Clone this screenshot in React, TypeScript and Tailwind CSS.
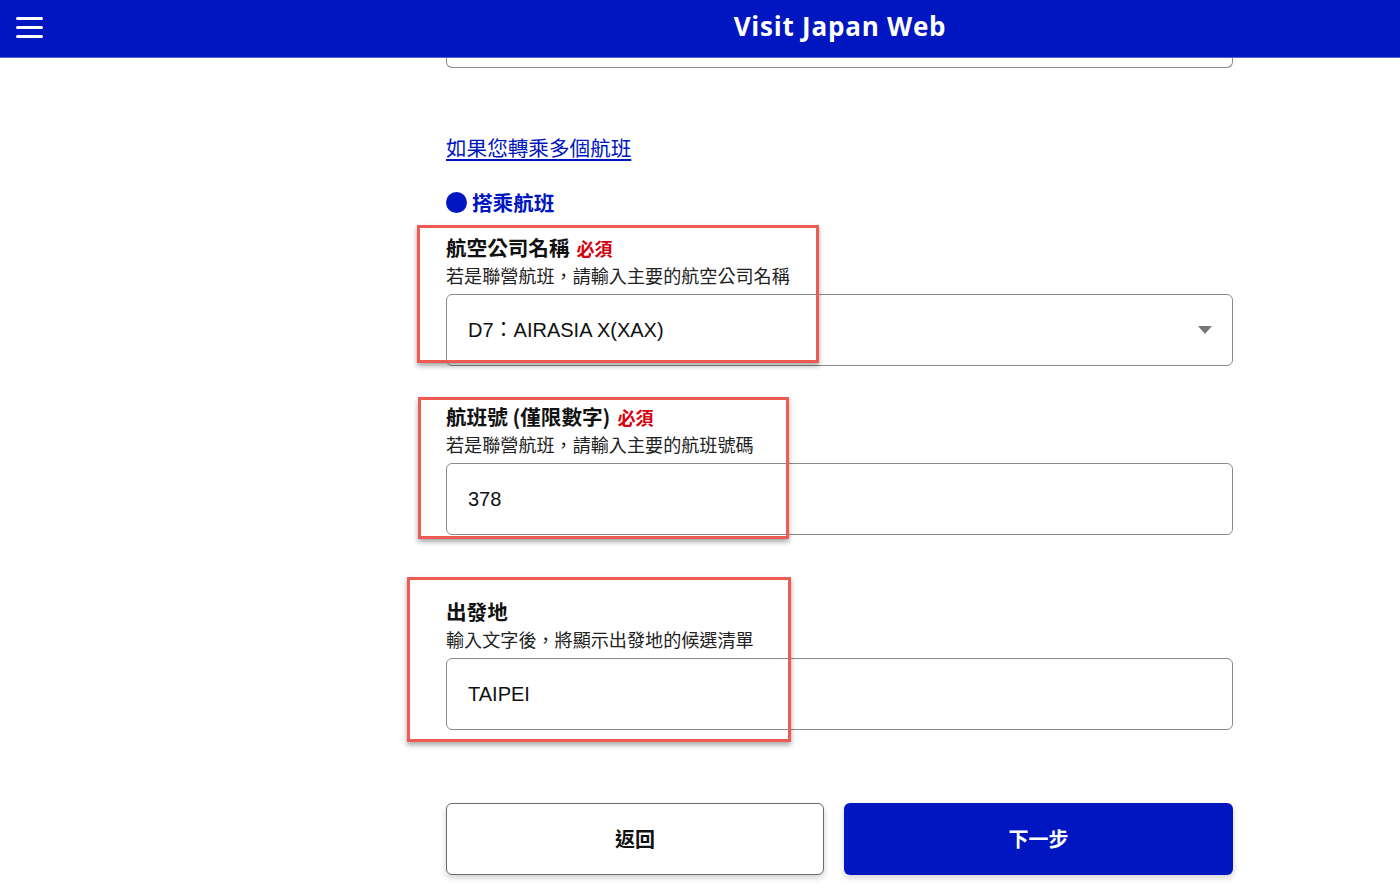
import { useState } from "react";

const CJK = "font-['Noto_Sans_CJK_TC','Noto_Sans',sans-serif]";
const LATIN = "font-['Liberation_Sans','Noto_Sans_CJK_TC',sans-serif]";

function FieldLabel({ label, required, hint }: { label: string; required?: boolean; hint: string }) {
  return (
    <div className={CJK}>
      <div className="flex items-baseline h-[28px] leading-[26px]">
        <span className="text-[20.6px] font-bold text-[#111]">{label}</span>
        {required && <span className="ml-[7px] text-[18px] font-bold text-[#d7000f]">必須</span>}
      </div>
      <div className="h-[28px] leading-[26px] text-[18.1px] text-[#222]">{hint}</div>
    </div>
  );
}

function TextBox({ value, select }: { value: string; select?: boolean }) {
  return (
    <div className="mt-[4px] h-[72px] rounded-[6px] border border-[#8a8a8a] bg-white flex items-center pl-[21px] pr-[20px]">
      <span className={`${LATIN} flex-1 text-[20px] text-[#111]`}>{value}</span>
      {select && (
        <svg width="14" height="8" viewBox="0 0 14 8">
          <polygon points="0,0 14,0 7,8" fill="#777" />
        </svg>
      )}
    </div>
  );
}

export default function App() {
  const [flights] = useState({ airline: "D7：AIRASIA X(XAX)", number: "378", from: "TAIPEI" });

  return (
    <div className="relative min-h-[896px] bg-white">
      {/* header */}
      <header className="relative h-[57px] bg-[#0016c0] shadow-[0_1px_0_#5563d4] flex items-center">
        <button className="ml-[16px] mt-[-2px] flex flex-col gap-[6.5px] w-[27px]" aria-label="menu">
          <span className="block h-[2.5px] bg-white rounded-full" />
          <span className="block h-[2.5px] bg-white rounded-full" />
          <span className="block h-[2.5px] bg-white rounded-full" />
        </button>
        <div className="flex-1 pl-[237px] pb-[5px] text-center">
          <span className="font-['Open_Sans',sans-serif] font-bold text-[26px] tracking-[0.03em] text-white">Visit Japan Web</span>
        </div>
      </header>

      <main className="pl-[279px]">
        <div className="mx-auto w-[787px]">
          {/* previous input, scrolled under header */}
          <div className="h-[11px] rounded-b-[6px] border border-t-0 border-[#8a8a8a]" />

          <a href="#" className={`${CJK} block mt-[66px] h-[28px] leading-[26px] text-[20.6px] text-[#0016c0] underline underline-offset-[3px]`}>
            如果您轉乘多個航班
          </a>

          <div className={`${CJK} mt-[26px] flex items-center h-[28px]`}>
            <span className="w-[21px] h-[21px] rounded-full bg-[#0016c0]" />
            <span className="ml-[5px] text-[20.6px] font-bold text-[#0016c0] leading-[26px]">搭乘航班</span>
          </div>

          <div className="mt-[18px]">
            <FieldLabel label="航空公司名稱" required hint="若是聯營航班，請輸入主要的航空公司名稱" />
            <TextBox value={flights.airline} select />
          </div>

          <div className="mt-[37px]">
            <FieldLabel label="航班號 (僅限數字)" required hint="若是聯營航班，請輸入主要的航班號碼" />
            <TextBox value={flights.number} />
          </div>

          <div className="mt-[63px]">
            <FieldLabel label="出發地" hint="輸入文字後，將顯示出發地的候選清單" />
            <TextBox value={flights.from} />
          </div>

          <div className={`${CJK} mt-[73px] flex gap-[20px]`}>
            <button className="w-[378px] h-[72px] rounded-[6px] border border-[#6b6b6b] bg-white shadow-[0_3px_6px_rgba(0,0,0,0.18)] text-[20px] font-bold text-[#111]">
              返回
            </button>
            <button className="flex-1 h-[72px] rounded-[6px] bg-[#0016c0] shadow-[0_3px_6px_rgba(0,0,0,0.18)] text-[20px] font-bold text-white">
              下一步
            </button>
          </div>
        </div>
      </main>

      {/* red annotation boxes */}
      <div className="absolute left-[417px] top-[225px] w-[402px] h-[138px] border-[3px] border-[#ee5b53] shadow-[0_3px_5px_rgba(0,0,0,0.35)] pointer-events-none" />
      <div className="absolute left-[418px] top-[397px] w-[371px] h-[142px] border-[3px] border-[#ee5b53] shadow-[0_3px_5px_rgba(0,0,0,0.35)] pointer-events-none" />
      <div className="absolute left-[407px] top-[577px] w-[384px] h-[165px] border-[3px] border-[#ee5b53] shadow-[0_3px_5px_rgba(0,0,0,0.35)] pointer-events-none" />
    </div>
  );
}
